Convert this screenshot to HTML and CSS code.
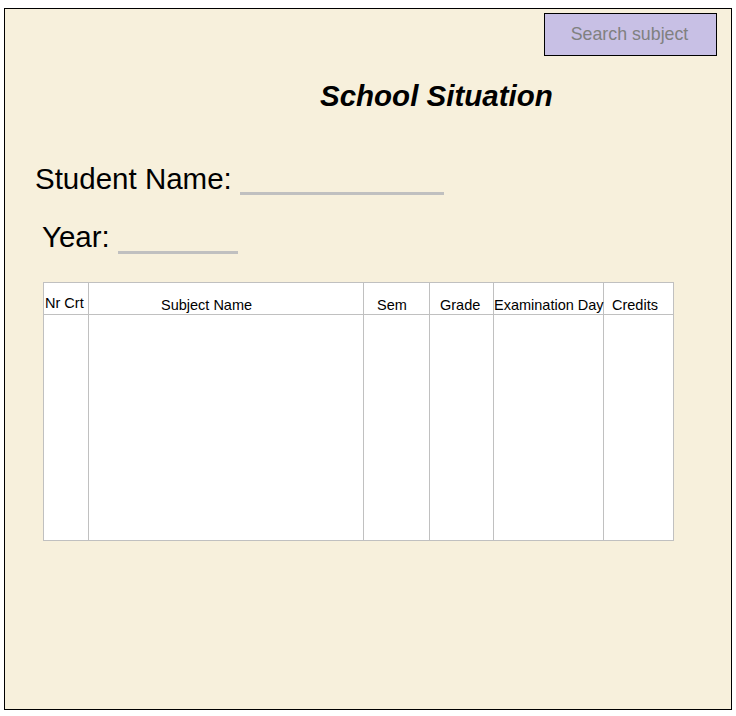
FILE: index.html
```html
<!DOCTYPE html>
<html lang="en">
<head>
<meta charset="utf-8">
<title>School Situation</title>
<link rel="stylesheet" href="styles.css">
</head>
<body>
<div class="frame">
  <div class="topbar">
    <button class="search-btn" type="button">Search subject</button>
  </div>
  <h1 class="title">School Situation</h1>
  <div class="field field-name">Student Name: <span class="blank blank-name"></span></div>
  <div class="field field-year">Year: <span class="blank blank-year"></span></div>
  <div class="grid">
    <div class="hcell h-nr">Nr Crt</div>
    <div class="hcell h-subject">Subject Name</div>
    <div class="hcell h-sem">Sem</div>
    <div class="hcell h-grade">Grade</div>
    <div class="hcell h-exam">Examination Day</div>
    <div class="hcell h-credits">Credits</div>
    <div class="bcell"></div>
    <div class="bcell"></div>
    <div class="bcell"></div>
    <div class="bcell"></div>
    <div class="bcell"></div>
    <div class="bcell"></div>
  </div>
</div>
</body>
</html>
```
FILE: styles.css
```css
* { box-sizing: border-box; }
html, body { margin: 0; padding: 0; background: #ffffff; }
body { font-family: "Liberation Sans", Arial, sans-serif; color: #000; }

.frame {
  margin: 8px 0 0 4px;
  width: 728px;
  height: 702px;
  border: 1px solid #000;
  background: #f7f0dc;
  display: flex;
  flex-direction: column;
}

.topbar {
  display: flex;
  justify-content: flex-end;
  padding: 4px 14px 0 0;
}

.search-btn {
  width: 173px;
  height: 43px;
  background: #c8c0e5;
  border: 1px solid #000;
  color: #808080;
  font-family: "Liberation Sans", Arial, sans-serif;
  font-size: 17.8px;
  padding: 0 2px 0 0;
  margin: 0;
}

.title {
  margin: 20px 0 0 315px;
  font-size: 29.5px;
  line-height: 40px;
  height: 40px;
  font-weight: bold;
  font-style: italic;
}

.field {
  font-size: 29.5px;
  line-height: 40px;
  height: 40px;
  white-space: nowrap;
}
.field-name { margin-top: 43px; padding-left: 30px; }
.field-year { margin-top: 18px; padding-left: 37px; }

.blank {
  display: inline-block;
  border-bottom: 3px solid #c0c0c0;
  height: 3px;
}
.blank-name { width: 204px; margin-bottom: -6px; }
.blank-year { width: 120px; margin-bottom: -7px; }

.grid {
  margin: 25px 0 0 38px;
  width: 631px;
  display: grid;
  grid-template-columns: 45px 275px 66px 64px 110px 70px;
  grid-template-rows: 32px 226px;
  border-left: 1px solid #c0c0c0;
  border-top: 1px solid #c0c0c0;
  background: #fff;
}

.hcell, .bcell {
  border-right: 1px solid #c0c0c0;
  border-bottom: 1px solid #c0c0c0;
}

.hcell {
  display: flex;
  align-items: flex-end;
  font-size: 14.5px;
  line-height: 16px;
  padding-bottom: 1px;
  white-space: nowrap;
  overflow: visible;
}
.h-nr { padding: 0 0 3px 1px; }
.h-subject { padding-left: 72px; }
.h-sem { padding-left: 13px; }
.h-grade { padding-left: 10px; }
.h-exam { padding-left: 0; }
.h-credits { padding-left: 8px; }
```
